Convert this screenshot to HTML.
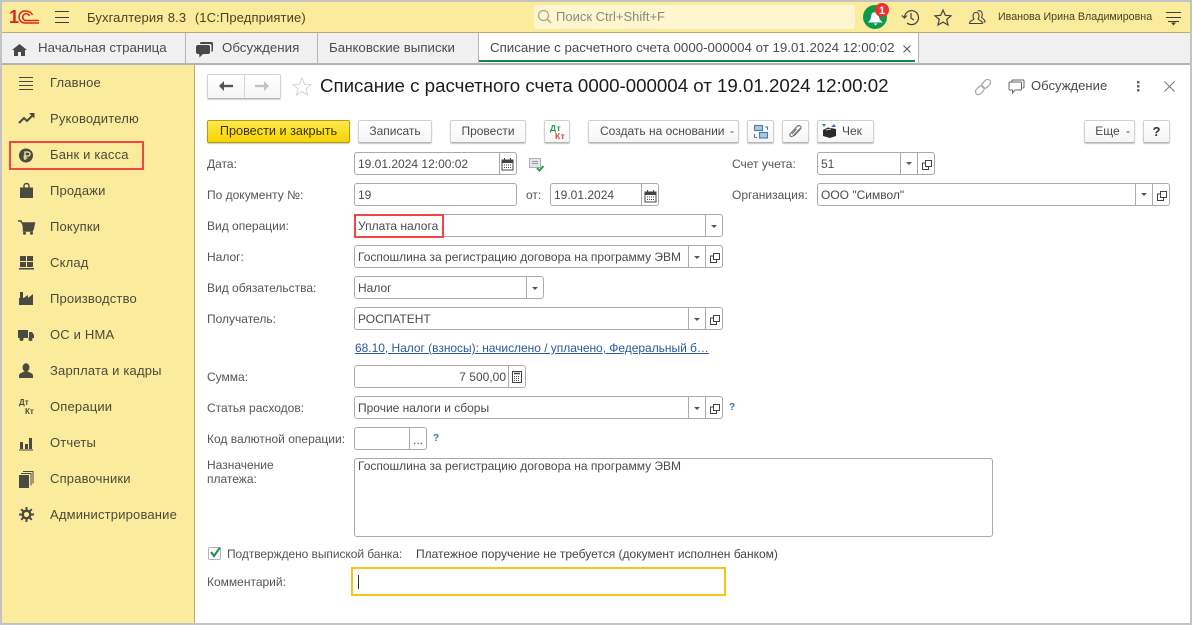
<!DOCTYPE html>
<html lang="ru"><head><meta charset="utf-8"><title>1С</title>
<style>
*{box-sizing:border-box}
html,body{margin:0;padding:0}
body{width:1192px;height:625px;position:relative;overflow:hidden;background:#fff;font-family:"Liberation Sans",Arial,sans-serif;font-size:12px;color:#4b4b4b}
.a{position:absolute}
.t{position:absolute;white-space:nowrap;line-height:14px}
svg{position:absolute;overflow:visible}
.m{position:absolute;left:50px;font-size:13px;letter-spacing:.18px;line-height:16px;color:#4a4a3a;white-space:nowrap}
.l{position:absolute;left:207px;font-size:12px;line-height:14px;color:#555;white-space:nowrap}
.f{position:absolute;height:23px;border:1px solid #aaa;border-radius:3px;background:#fff;color:#4b4b4b;font-size:12px;line-height:22px;padding-left:3px;white-space:nowrap}
.s{position:absolute;top:-1px;height:23px;border-left:1px solid #aaa;width:1px}
.b{position:absolute;top:120px;height:23px;border:1px solid #d0d0d0;border-bottom-color:#b4b4b4;border-radius:2px;background:linear-gradient(#fff,#f6f6f6);box-shadow:0 1px 1px #c8c8c8;font-size:12px;line-height:21px;text-align:center;color:#4b4b4b;white-space:nowrap}
.tab{position:absolute;top:33px;height:31px;border-right:1px solid #b4b4b4;font-size:13.300px;color:#4b4b4b}
.tr{width:6px;height:3px}
.op{width:10px;height:10px}
</style></head><body>
<div class="a" style="left:0;top:0;width:1192px;height:625px;border:2px solid #c3c3c3;z-index:9;pointer-events:none"></div>

<div class="a" style="left:2px;top:2px;width:1188px;height:31px;background:#fbeb9d;border-bottom:1px solid #b9aa6a"></div>
<div class="t" style="left:9px;top:4px;font-size:18px;line-height:26px;font-weight:bold;color:#d9261c;letter-spacing:-1px">1</div>
<svg style="left:17px;top:9px" width="23" height="16" viewBox="0 0 23 16"><path d="M15.500 6C14 3 11 2 8 2A6 6 0 0 0 8 14H22M12.500 7A3.500 3.500 0 1 0 8 11.500H22" fill="none" stroke="#d9261c" stroke-width="1.500"/></svg>
<svg style="left:55px;top:11px" width="15" height="13"><path d="M0 .5H14M0 6.500H14M0 11.500H14" stroke="#3c3c3c"/></svg>
<div class="t" style="left:87px;top:11px;font-size:13px;color:#4f3f20;word-spacing:.6px;letter-spacing:.12px">Бухгалтерия 8.3&nbsp; (1С:Предприятие)</div>
<div class="a" style="left:534px;top:5px;width:321px;height:24px;background:#fdf6cf;border-radius:3px"></div>
<svg style="left:537px;top:9px" width="16" height="16"><circle cx="6.500" cy="6.500" r="5" fill="none" stroke="#a8a898" stroke-width="1.300"/><path d="M10 10L14 14" stroke="#a8a898" stroke-width="1.500"/></svg>
<div class="t" style="left:556px;top:10px;color:#8a8a80;font-size:13px">Поиск Ctrl+Shift+F</div>
<svg style="left:863px;top:5px" width="26" height="26"><circle cx="12" cy="12" r="12" fill="#0b9a4d"/><path d="M5 17.500C8 15 8 12 8.500 9.500C9 6.500 15 6.500 15.500 9.500C16 12 16 15 20 17.500ZM10.500 18.500H14.500L12.500 20.500Z" fill="#fff"/><circle cx="19" cy="5" r="7" fill="#ed2f2f"/><text x="19" y="9" text-anchor="middle" fill="#fff" font-family="Liberation Sans" font-weight="bold" font-size="11">1</text></svg>
<svg style="left:901px;top:9px" width="19" height="17" fill="none" stroke="#444" stroke-width="1.200"><path d="M3.500 8.500A7 7 0 1 1 6 14"/><path d="M.8 6.500L3.500 9L6 6.500"/><path d="M10 4V9L13 11"/></svg>
<svg style="left:934px;top:9px" width="18" height="17"><path d="M9 1L11.300 6.300L17 6.800L12.700 10.500L14 16L9 13.100L4 16L5.300 10.500L1 6.800L6.700 6.300Z" fill="none" stroke="#444" stroke-width="1.200"/></svg>
<svg style="left:969px;top:10px" width="17" height="15" fill="none" stroke="#444" stroke-width="1.100"><path d="M.5 13.500C.5 10.500 4 10.500 5 9C3.500 7 3.500 2.500 7 2.500C10.500 2.500 10.500 7 9 9C10 10.500 13.500 10.500 13.500 13.500Z"/><path d="M8.500 1.200C12-.5 14.500 3 12.500 7.500C13.500 9 16 9 16 12H14.500"/></svg>
<div class="t" style="left:998px;top:10px;font-size:10.700px;color:#4f4020">Иванова Ирина Владимировна</div>
<svg style="left:1166px;top:12px" width="15" height="13"><path d="M0 .5H15M0 5.500H15" stroke="#3c3c3c"/><path d="M2 9.500H13" stroke="#3c3c3c"/><path d="M5 10.500H10L7.500 13.500Z" fill="#3c3c3c"/></svg>

<div class="a" style="left:2px;top:33px;width:1188px;height:32px;background:#f0f0f0;border-bottom:2px solid #b4b4b4"></div>
<div class="tab" style="left:2px;width:184px"><span class="t" style="left:36px;top:8px">Начальная страница</span></div>
<svg style="left:12px;top:44px" width="15" height="12"><path d="M7.500 0L15 6H13V12H9V8H6V12H2V6H0Z" fill="#484848"/></svg>
<div class="tab" style="left:186px;width:132px"><span class="t" style="left:36px;top:8px">Обсуждения</span></div>
<svg style="left:196px;top:42px" width="17" height="16"><path d="M5 0H15.500Q17 0 17 1.500V8Q17 9.500 15.500 10V3.500Q15.500 2 14 2H4Q4 0 5 0Z" fill="#484848"/><rect x="0" y="3" width="14" height="9" rx="2" fill="#484848"/><path d="M3 11H8L3.500 15.500Z" fill="#484848"/></svg>
<div class="tab" style="left:318px;width:161px"><span class="t" style="left:11px;top:8px">Банковские выписки</span></div>
<div class="tab" style="left:479px;width:440px;background:#fff;height:30px"><span class="t" style="left:11px;top:8px;white-space:nowrap">Списание с расчетного счета 0000-000004 от 19.01.2024 12:00:02</span><div class="a" style="left:0;top:27px;width:436px;height:2px;background:#0b8a45"></div></div>
<svg style="left:903px;top:45px" width="8" height="8"><path d="M.5.5L7.500 7.500M7.500.5L.5 7.500" stroke="#555"/></svg>

<div class="a" style="left:2px;top:65px;width:193px;height:558px;background:#fbeb9d;border-right:1px solid #b9aa6a"></div>
<div class="a" style="left:9px;top:141px;width:135px;height:29px;border:2px solid #f24545"></div>
<div class="m" style="top:75px">Главное</div>
<div class="m" style="top:111px">Руководителю</div>
<div class="m" style="top:147px">Банк и касса</div>
<div class="m" style="top:183px">Продажи</div>
<div class="m" style="top:219px">Покупки</div>
<div class="m" style="top:255px">Склад</div>
<div class="m" style="top:291px">Производство</div>
<div class="m" style="top:327px">ОС и НМА</div>
<div class="m" style="top:363px">Зарплата и кадры</div>
<div class="m" style="top:399px">Операции</div>
<div class="m" style="top:435px">Отчеты</div>
<div class="m" style="top:471px">Справочники</div>
<div class="m" style="top:507px">Администрирование</div>

<svg style="left:19px;top:77px" width="15" height="13"><path d="M0 .5H14M0 4.500H14M0 8.500H14M0 12.500H14" stroke="#4a4a40"/></svg>
<svg style="left:18px;top:113px" width="17" height="12"><path d="M1 10L6 5L9 8L15 2" fill="none" stroke="#4a4a40" stroke-width="2"/><path d="M11 0H16.500V5.500Z" fill="#4a4a40"/></svg>
<svg style="left:19px;top:148px" width="15" height="15"><circle cx="7" cy="7.500" r="7" fill="#4a4a40"/><path d="M6 12V4H9A2 2 0 0 1 9 8H4.500M4.500 10H8.500" fill="none" stroke="#fbeb9d" stroke-width="1.300"/></svg>
<svg style="left:20px;top:183px" width="13" height="16"><path d="M4 5V2.800A2.500 2.300 0 0 1 9 2.800V5" fill="none" stroke="#4a4a40" stroke-width="1.400"/><path d="M0 4.500H13V15H0Z" fill="#4a4a40"/></svg>
<svg style="left:18px;top:220px" width="17" height="15"><path d="M0 1H3L4 3H16.500L15 9.500H5.500L5.500 11H15" fill="none" stroke="#4a4a40" stroke-width="1.400"/><path d="M4 3H16.500L15 9.500H5Z" fill="#4a4a40"/><circle cx="6.500" cy="13.200" r="1.500" fill="#4a4a40"/><circle cx="13.500" cy="13.200" r="1.500" fill="#4a4a40"/></svg>
<svg style="left:19px;top:256px" width="15" height="14" fill="#4a4a40"><rect x="1" width="6" height="5"/><rect x="8" width="6" height="5"/><rect x="1" y="6" width="6" height="5"/><rect x="8" y="6" width="6" height="5"/><rect y="12" width="15" height="1.500"/></svg>
<svg style="left:19px;top:291px" width="15" height="15" fill="#4a4a40"><rect x="1" y="1" width="3" height="6"/><path d="M0 14V7L4.500 7L9 4V7L14 3V14Z"/></svg>
<svg style="left:18px;top:329px" width="16" height="12" fill="#4a4a40"><rect x="0" y="1" width="10" height="8"/><path d="M11 3H14L16 6V9H11Z"/><circle cx="3.500" cy="10" r="2"/><circle cx="12.500" cy="10" r="2"/></svg>
<svg style="left:19px;top:363px" width="14" height="15" fill="#4a4a40"><ellipse cx="7" cy="4.500" rx="3.500" ry="4.200"/><path d="M0 15V12.500C0 10 4 9.500 5 8.500H9C10 9.500 14 10 14 12.500V15Z"/></svg>
<div class="t" style="left:19px;top:398px;font-size:8px;line-height:9px;font-weight:bold;color:#4a4a40">Дт<br><span style="margin-left:6px">Кт</span></div>
<svg style="left:19px;top:437px" width="14" height="14" fill="#4a4a40"><rect x="1" y="5" width="3" height="7"/><rect x="6" y="7" width="3" height="5"/><rect x="10" y="1" width="3" height="11"/><rect y="12.500" width="14" height="1"/></svg>
<svg style="left:19px;top:471px" width="15" height="17"><rect y="4" width="10" height="13" fill="#4a4a40"/><path d="M2 2.500H12V14.500M4 .5H14V12.500" fill="none" stroke="#4a4a40"/></svg>
<svg style="left:19px;top:507px" width="15" height="15"><circle cx="7.500" cy="7.500" r="3.800" fill="none" stroke="#4a4a40" stroke-width="2.400"/><path d="M7.500 0V15M0 7.500H15M2.200 2.200L12.800 12.800M12.800 2.200L2.200 12.800" stroke="#4a4a40" stroke-width="2" stroke-dasharray="3 9 3"/></svg>

<div class="a" style="left:207px;top:74px;width:74px;height:25px;border:1px solid #d4d4d4;border-bottom-color:#b8b8b8;border-radius:2px;background:linear-gradient(#fff,#f6f6f6);box-shadow:0 1px 1px #d0d0d0"></div>
<div class="a" style="left:244px;top:75px;width:1px;height:23px;background:#d4d4d4"></div>
<svg style="left:219px;top:81px" width="14" height="10"><path d="M14 5H4" stroke="#555" stroke-width="2.400"/><path d="M5 0V10L0 5Z" fill="#555"/></svg>
<svg style="left:255px;top:81px" width="14" height="10"><path d="M0 5H10" stroke="#c2c2c2" stroke-width="2.400"/><path d="M9 0V10L14 5Z" fill="#c2c2c2"/></svg>
<svg style="left:292px;top:77px" width="20" height="19"><path d="M10 1L12.500 7.100L19 7.600L14 11.800L15.600 18L10 14.700L4.400 18L6 11.800L1 7.600L7.500 7.100Z" fill="none" stroke="#d4d4d4"/></svg>
<div class="t" style="left:320px;top:75px;font-size:18.700px;line-height:22px;color:#1c1c1c">Списание с расчетного счета 0000-000004 от 19.01.2024 12:00:02</div>
<svg style="left:975px;top:79px" width="16" height="16" fill="none" stroke="#aaa" stroke-width="1.300"><g transform="rotate(-45 8 8)"><rect x="-1.500" y="5" width="10" height="6" rx="3"/><rect x="7.500" y="5" width="10" height="6" rx="3"/></g></svg>
<svg style="left:1008px;top:79px" width="17" height="16" fill="none" stroke="#666"><path d="M4 2.500V2Q4 1 5 1H15Q16 1 16 2V8Q16 9 15 9H14.500"/><path d="M2 3H12.500Q13.500 3 13.500 4V10Q13.500 11 12.500 11H7L4.500 14V11H2Q1 11 1 10V4Q1 3 2 3Z"/></svg>
<div class="t" style="left:1031px;top:79px;font-size:13px;color:#4b4b4b;letter-spacing:.05px">Обсуждение</div>
<svg style="left:1137px;top:81px" width="4" height="12" fill="#666"><rect x="0" width="2.500" height="2.500"/><rect x="0" y="4" width="2.500" height="2.500"/><rect x="0" y="8" width="2.500" height="2.500"/></svg>
<svg style="left:1164px;top:81px" width="11" height="11"><path d="M.5.5L10.500 10.500M10.500.5L.5 10.500" stroke="#777"/></svg>

<div class="b" style="left:207px;width:143px;background:linear-gradient(#ffe94d,#f7d300);border-color:#b09a20;color:#3d3200;font-size:12.700px">Провести и закрыть</div>
<div class="b" style="left:358px;width:74px">Записать</div>
<div class="b" style="left:450px;width:76px">Провести</div>
<div class="b" style="left:544px;width:26px"></div>
<div class="t" style="left:550px;top:124px;font-size:8.500px;line-height:8px;font-weight:bold;letter-spacing:.4px;color:#1aa14f">Дт<br><span style="margin-left:5px;color:#e0403c">Кт</span></div>
<div class="b" style="left:588px;width:151px;text-align:left;padding-left:11px">Создать на основании<span class="t" style="left:141px;top:3px">-</span></div>
<div class="b" style="left:747px;width:27px"></div>
<svg style="left:754px;top:125px" width="14" height="14" fill="none" stroke="#4a7ea8" stroke-width="1.100"><rect x=".5" y=".5" width="8" height="5" fill="#a8c8de"/><rect x="5.500" y="7.500" width="8" height="5.500" fill="#a8c8de"/><path d="M11 2H13.500V5M3 12.500H.5V9"/></svg>
<div class="b" style="left:782px;width:27px"></div>
<svg style="left:788px;top:124px" width="15" height="15" fill="none" stroke="#777" stroke-width="1.200"><path d="M12 4.500L5.500 11.500C3 14 .5 11.500 3 9L9.500 2C11.500 .5 14 3 12.500 5L6 12M8.500 5L4 10"/></svg>
<div class="b" style="left:817px;width:57px;text-align:left;padding-left:24px">Чек</div>
<svg style="left:822px;top:124px" width="16" height="15"><path d="M0 0H4L2 3Z" fill="#1aa14f"/><path d="M9 3L12 0L14 3Z" fill="#3b6cc8"/><path d="M1 6L6 3.500L14 5V12L8 14L1 12Z" fill="#2b2b2b"/><path d="M4 6L9 5" stroke="#ddd"/></svg>
<div class="b" style="left:1084px;width:51px;padding-right:4px">Еще<span style="position:absolute;left:41px;top:0">-</span></div>
<div class="b" style="left:1143px;width:27px;font-weight:bold;color:#333;font-size:13px">?</div>

<div class="l" style="top:157px">Дата:</div>
<div class="f" style="left:354px;top:152px;width:163px">19.01.2024 12:00:02<div class="s" style="left:144px"></div></div>
<svg style="left:502px;top:158px" width="11" height="12"><path d="M0 2H11V12H0Z" fill="none" stroke="#444"/><path d="M0 2H11V5H0ZM2 0H3V2H2ZM8 0H9V2H8Z" fill="#444"/><path d="M2 7H9M2 9.500H9" stroke="#444" stroke-dasharray="1 1"/></svg>
<svg style="left:529px;top:158px" width="15" height="14"><rect x=".5" y=".5" width="11" height="9" fill="#e0e6ea" stroke="#a9b3ba"/><path d="M3 3.500H9M3 5.500H9" stroke="#8f9aa2"/><path d="M8 10L10.500 12.500L14.500 8" fill="none" stroke="#2ba24c" stroke-width="2"/></svg>

<div class="l" style="top:188px">По документу №:</div>
<div class="f" style="left:354px;top:183px;width:163px">19</div>
<div class="l" style="left:526px;top:188px">от:</div>
<div class="f" style="left:550px;top:183px;width:109px">19.01.2024<div class="s" style="left:90px"></div></div>
<svg style="left:645px;top:190px" width="11" height="12"><path d="M0 2H11V12H0Z" fill="none" stroke="#444"/><path d="M0 2H11V5H0ZM2 0H3V2H2ZM8 0H9V2H8Z" fill="#444"/><path d="M2 7H9M2 9.500H9" stroke="#444" stroke-dasharray="1 1"/></svg>

<div class="l" style="left:732px;top:157px">Счет учета:</div>
<div class="f" style="left:817px;top:152px;width:118px">51<div class="s" style="left:82px"></div><div class="s" style="left:99px"></div></div>
<div class="l" style="left:732px;top:188px">Организация:</div>
<div class="f" style="left:817px;top:183px;width:353px">ООО "Символ"<div class="s" style="left:317px"></div><div class="s" style="left:334px"></div></div>
<svg class="tr" style="left:906px;top:162px"><path d="M0 0H6L3 3Z" fill="#555"/></svg>
<svg class="op" style="left:922px;top:160px" fill="none" stroke="#444"><rect x="3.500" y=".5" width="6" height="6"/><path d="M3 3H.5V9.500H6.500V7"/></svg>
<svg class="tr" style="left:1141px;top:193px"><path d="M0 0H6L3 3Z" fill="#555"/></svg>
<svg class="op" style="left:1157px;top:191px" fill="none" stroke="#444"><rect x="3.500" y=".5" width="6" height="6"/><path d="M3 3H.5V9.500H6.500V7"/></svg>

<div class="l" style="top:219px">Вид операции:</div>
<div class="f" style="left:354px;top:214px;width:369px">Уплата налога<div class="s" style="left:350px"></div></div>
<div class="a" style="left:354px;top:214px;width:90px;height:24px;border:2px solid #f24545"></div>
<svg class="tr" style="left:711px;top:225px"><path d="M0 0H6L3 3Z" fill="#555"/></svg>

<div class="l" style="top:250px">Налог:</div>
<div class="f" style="left:354px;top:245px;width:369px">Госпошлина за регистрацию договора на программу ЭВМ<div class="s" style="left:333px"></div><div class="s" style="left:350px"></div></div>
<svg class="tr" style="left:694px;top:256px"><path d="M0 0H6L3 3Z" fill="#555"/></svg>
<svg class="op" style="left:710px;top:253px" fill="none" stroke="#444"><rect x="3.500" y=".5" width="6" height="6"/><path d="M3 3H.5V9.500H6.500V7"/></svg>

<div class="l" style="top:281px">Вид обязательства:</div>
<div class="f" style="left:354px;top:276px;width:190px">Налог<div class="s" style="left:171px"></div></div>
<svg class="tr" style="left:532px;top:287px"><path d="M0 0H6L3 3Z" fill="#555"/></svg>

<div class="l" style="top:312px">Получатель:</div>
<div class="f" style="left:354px;top:307px;width:369px">РОСПАТЕНТ<div class="s" style="left:333px"></div><div class="s" style="left:350px"></div></div>
<svg class="tr" style="left:694px;top:318px"><path d="M0 0H6L3 3Z" fill="#555"/></svg>
<svg class="op" style="left:710px;top:315px" fill="none" stroke="#444"><rect x="3.500" y=".5" width="6" height="6"/><path d="M3 3H.5V9.500H6.500V7"/></svg>

<div class="t" style="left:355px;top:341px;color:#2a5a9a;text-decoration:underline;letter-spacing:-.03px">68.10, Налог (взносы): начислено / уплачено, Федеральный б…</div>

<div class="l" style="top:370px">Сумма:</div>
<div class="f" style="left:354px;top:365px;width:172px;text-align:right;padding-right:19px">7 500,00<div class="s" style="left:153px"></div></div>
<svg style="left:512px;top:371px" width="10" height="12"><rect x=".5" y=".5" width="9" height="11" fill="none" stroke="#444"/><path d="M2 2.500H8" stroke="#444" stroke-width="1.500"/><path d="M2 5.500H8M2 7.500H8M2 9.500H8" stroke="#444" stroke-dasharray="1 1"/></svg>

<div class="l" style="top:401px">Статья расходов:</div>
<div class="f" style="left:354px;top:396px;width:369px">Прочие налоги и сборы<div class="s" style="left:333px"></div><div class="s" style="left:350px"></div></div>
<svg class="tr" style="left:694px;top:407px"><path d="M0 0H6L3 3Z" fill="#555"/></svg>
<svg class="op" style="left:710px;top:404px" fill="none" stroke="#444"><rect x="3.500" y=".5" width="6" height="6"/><path d="M3 3H.5V9.500H6.500V7"/></svg>
<div class="t" style="left:729px;top:401px;font-size:10px;font-weight:bold;color:#2a7ab8">?</div>

<div class="l" style="top:432px">Код валютной операции:</div>
<div class="f" style="left:354px;top:427px;width:73px"><div class="s" style="left:54px"></div><span class="t" style="left:58px;top:5px">...</span></div>
<div class="t" style="left:433px;top:432px;font-size:10px;font-weight:bold;color:#2a7ab8">?</div>

<div class="l" style="top:458px">Назначение<br>платежа:</div>
<div class="f" style="left:354px;top:458px;width:639px;height:79px;line-height:15px">Госпошлина за регистрацию договора на программу ЭВМ</div>

<div class="a" style="left:208px;top:547px;width:13px;height:13px;border:1px solid #b4b4b4;border-radius:2px;background:#fff"></div>
<svg style="left:209px;top:546px" width="13" height="12"><path d="M2 6L5 10L11 1.500" fill="none" stroke="#17934a" stroke-width="2"/></svg>
<div class="l" style="left:227px;top:547px;letter-spacing:-.07px">Подтверждено выпиской банка:</div>
<div class="t" style="left:416px;top:547px;color:#444">Платежное поручение не требуется (документ исполнен банком)</div>
<div class="l" style="top:575px">Комментарий:</div>
<div class="a" style="left:351px;top:567px;width:375px;height:29px;border:2px solid #f5c518;background:#fff"></div>
<div class="a" style="left:358px;top:575px;width:1px;height:14px;background:#333"></div>
</body></html>
